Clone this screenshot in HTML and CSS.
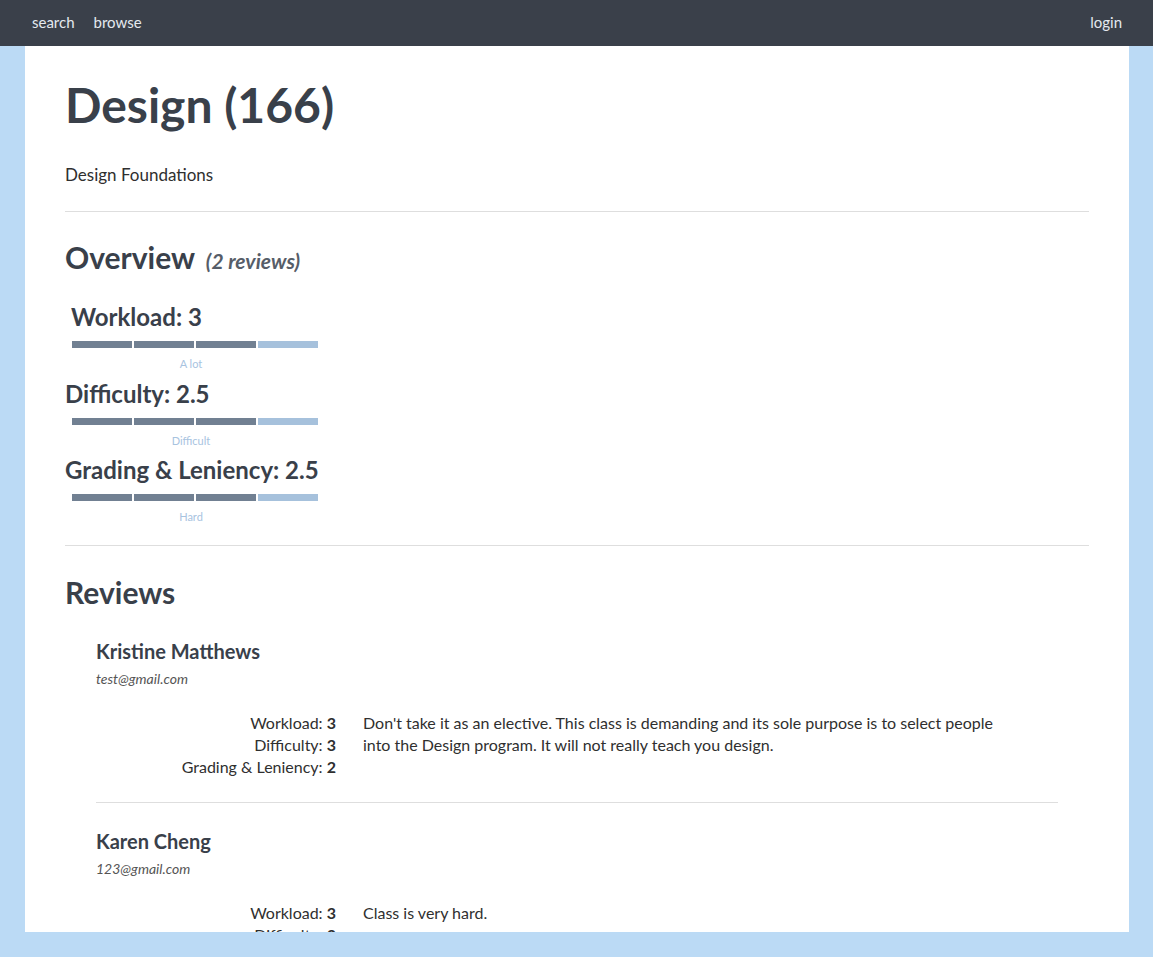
FILE: index.html
```html
<!DOCTYPE html>
<html lang="en">
<head>
<meta charset="utf-8">
<title>Design (166)</title>
<link rel="stylesheet" href="styles.css">
</head>
<body>
<nav class="topbar">
  <div class="nav-left">
    <a class="nav-link" href="#">search</a>
    <a class="nav-link" href="#">browse</a>
  </div>
  <a class="nav-link" href="#">login</a>
</nav>
<main class="page">
  <h1 class="title">Design (166)</h1>
  <p class="subtitle">Design Foundations</p>
  <hr class="rule">
  <section class="overview">
    <h2 class="section-title">Overview <span class="count">(2 reviews)</span></h2>
    <div class="metric metric-first">
      <h3 class="metric-title indent">Workload: 3</h3>
      <div class="bar"><span class="seg on"></span><span class="seg on"></span><span class="seg on"></span><span class="seg"></span></div>
      <div class="metric-label">A lot</div>
    </div>
    <div class="metric">
      <h3 class="metric-title">Difficulty: 2.5</h3>
      <div class="bar"><span class="seg on"></span><span class="seg on"></span><span class="seg on"></span><span class="seg"></span></div>
      <div class="metric-label">Difficult</div>
    </div>
    <div class="metric metric-last">
      <h3 class="metric-title">Grading &amp; Leniency: 2.5</h3>
      <div class="bar"><span class="seg on"></span><span class="seg on"></span><span class="seg on"></span><span class="seg"></span></div>
      <div class="metric-label">Hard</div>
    </div>
  </section>
  <hr class="rule rule-bottom">
  <section class="reviews">
    <h2 class="section-title reviews-title">Reviews</h2>
    <article class="review">
      <h4 class="reviewer">Kristine Matthews</h4>
      <div class="email">test@gmail.com</div>
      <div class="review-body">
        <div class="stats">
          <div>Workload: <b>3</b></div>
          <div>Difficulty: <b>3</b></div>
          <div>Grading &amp; Leniency: <b>2</b></div>
        </div>
        <p class="comment">Don't take it as an elective. This class is demanding and its sole purpose is to select people into the Design program. It will not really teach you design.</p>
      </div>
    </article>
    <hr class="review-rule">
    <article class="review review-next">
      <h4 class="reviewer">Karen Cheng</h4>
      <div class="email">123@gmail.com</div>
      <div class="review-body">
        <div class="stats">
          <div>Workload: <b>3</b></div>
          <div>Difficulty: <b>3</b></div>
          <div>Grading &amp; Leniency: <b>3</b></div>
        </div>
        <p class="comment">Class is very hard.</p>
      </div>
    </article>
  </section>
</main>
</body>
</html>
```

FILE: styles.css
```css
* { box-sizing: border-box; }

html, body {
  margin: 0;
  height: 100%;
}

body {
  background: #bbdaf5;
  font-family: Lato, "Liberation Sans", sans-serif;
  color: #2f2f2f;
  overflow: hidden;
}

.topbar {
  height: 46px;
  background: #3a404a;
  display: flex;
  align-items: center;
  justify-content: space-between;
  padding: 0 31px 2px 32px;
}

.nav-left {
  display: flex;
  gap: 19px;
}

.nav-link {
  color: #e4e9ef;
  text-decoration: none;
  font-size: 15px;
  line-height: 20px;
}

.page {
  margin: 0 24px 0 25px;
  height: calc(100vh - 46px - 25px);
  overflow: hidden;
  background: #fff;
  padding: 0 40px;
}

.title {
  margin: 29px 0 0;
  font-size: 48px;
  line-height: 60px;
  font-weight: 700;
  color: #39404a;
}

.subtitle {
  margin: 28px 0 0;
  font-size: 17px;
  line-height: 24px;
}

.rule {
  margin: 24px 0 0;
  border: 0;
  border-top: 1px solid #dedede;
}

.section-title {
  margin: 27px 0 0;
  font-size: 30px;
  line-height: 36px;
  font-weight: 700;
  color: #39404a;
}

.count {
  font-size: 21px;
  font-style: italic;
  color: #565d68;
  margin-left: 4px;
}

.metric-title {
  margin: 10px 0 0;
  font-size: 24px;
  line-height: 26px;
  font-weight: 700;
  color: #39404a;
}

.metric-first .metric-title { margin-top: 25px; }
.metric-last .metric-title { margin-top: 9px; }

.indent { padding-left: 6px; }

.bar {
  display: flex;
  gap: 2px;
  width: 246px;
  margin: 11px 0 0 7px;
}

.seg {
  width: 60px;
  height: 7px;
  background: #a6c1dc;
}

.seg.on { background: #718092; }

.metric-label {
  width: 246px;
  margin: 9px 0 0 3px;
  text-align: center;
  font-size: 11px;
  line-height: 14px;
  color: #a8c3df;
}

.rule-bottom { margin-top: 21px; }

.reviews-title { margin-top: 28px; }

.review {
  padding: 0 31px;
}

.reviewer {
  margin: 29px 0 0;
  font-size: 20px;
  line-height: 24px;
  font-weight: 700;
  color: #39404a;
}

.review-next .reviewer { margin-top: 26px; }

.email {
  margin-top: 7px;
  font-size: 14px;
  line-height: 18px;
  font-style: italic;
  color: #555;
}

.review-body {
  display: grid;
  grid-template-columns: 240px 645px;
  column-gap: 27px;
  margin-top: 24px;
  font-size: 16px;
  line-height: 22px;
}

.stats {
  text-align: right;
}

.stats b { font-weight: 700; }

.comment {
  margin: 0;
}

.review-rule {
  margin: 24px 31px 0;
  border: 0;
  border-top: 1px solid #dedede;
}
```
